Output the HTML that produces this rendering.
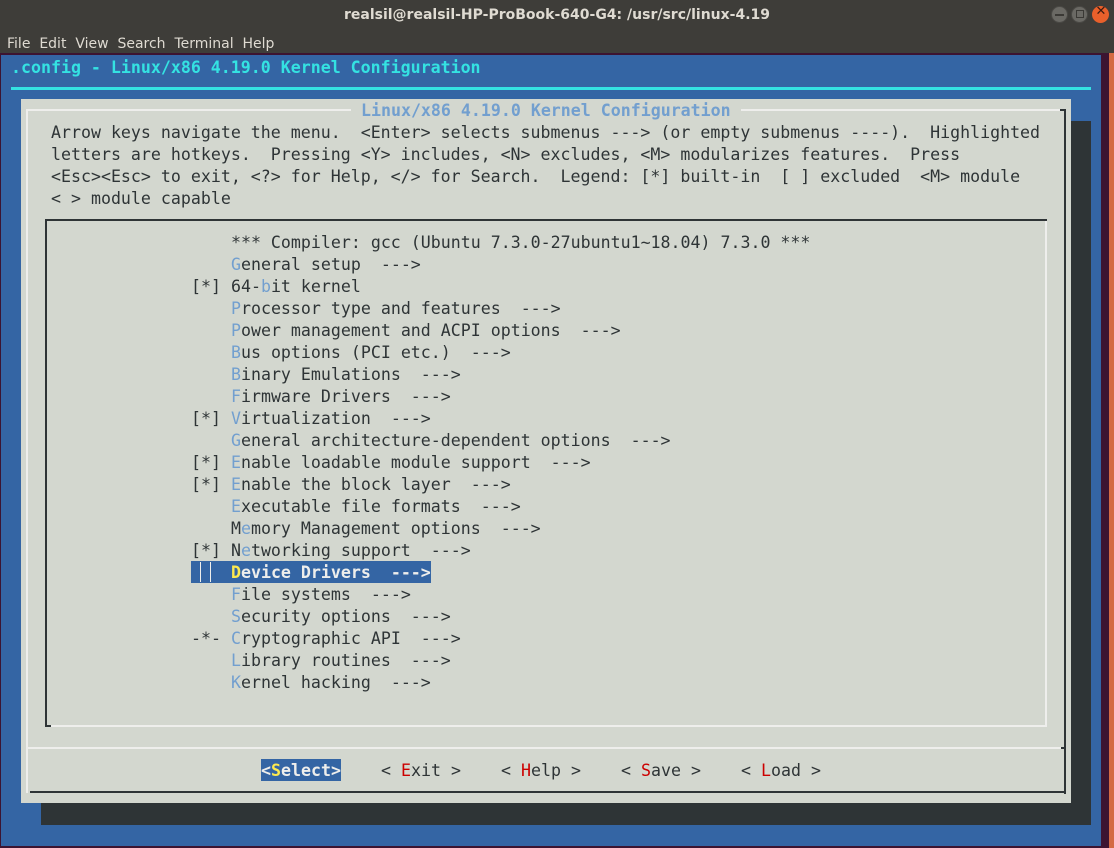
<!DOCTYPE html>
<html><head><meta charset="utf-8"><style>
*{margin:0;padding:0;box-sizing:border-box}
body{width:1114px;height:848px;overflow:hidden;background:#3465a4;position:relative;font-family:"DejaVu Sans Mono","Liberation Mono",monospace}
.abs{position:absolute}
.r{position:absolute;white-space:pre;font-size:16.6px;line-height:22px;height:22px;color:#2e3436;font-family:"DejaVu Sans Mono",monospace;padding-top:1px}
.h{color:#729fcf}
.ui{font-family:"DejaVu Sans","Liberation Sans",sans-serif;color:#dfdbd2;font-size:14px}
</style></head><body>
<div class="abs" style="left:0;top:0;width:1114px;height:28px;background:#3e3d39"></div>
<div class="abs ui" style="left:0;top:7px;width:1114px;text-align:center;font-weight:bold">realsil@realsil-HP-ProBook-640-G4: /usr/src/linux-4.19</div>
<div class="abs" style="left:1051px;top:6px;width:17px;height:17px;border-radius:50%;background:#6a6964;border:1px solid #4a4945"></div>
<div class="abs" style="left:1071px;top:6px;width:17px;height:17px;border-radius:50%;background:#6a6964;border:1px solid #4a4945"></div>
<div class="abs" style="left:1092px;top:6px;width:17px;height:17px;border-radius:50%;background:#e9602b"></div>
<div class="abs" style="left:1055px;top:14px;width:9px;height:2px;background:#3a3935"></div>
<div class="abs" style="left:1076px;top:10px;width:8px;height:8px;border:1.5px solid #3a3935"></div>
<div class="abs" style="left:1094px;top:4px;width:14px;color:#3a1a10;font-size:13px;text-align:center;font-family:'DejaVu Sans'">✕</div>
<div class="abs" style="left:0;top:28px;width:1114px;height:26px;background:#3e3d39"></div>
<div class="abs ui" style="left:7px;top:36px;word-spacing:0">File&nbsp; Edit&nbsp; View&nbsp; Search&nbsp; Terminal&nbsp; Help</div>
<div class="abs" style="left:0;top:53px;width:1114px;height:2px;background:#3c1431"></div>
<div class="abs" style="left:0;top:53px;width:1px;height:795px;background:#3c1431"></div>
<div class="abs" style="left:1101px;top:53px;width:8px;height:795px;background:#3c1431"></div>
<div class="abs" style="left:1109px;top:53px;width:5px;height:795px;background:#d46a43"></div>
<div class="abs" style="left:0;top:846px;width:1101px;height:2px;background:#3c1431"></div>
<div class="r" style="left:11px;top:56px;color:#34e2e2;font-weight:bold">.config - Linux/x86 4.19.0 Kernel Configuration</div>
<div class="abs" style="left:11px;top:87px;width:1080px;height:3px;background:#34e2e2"></div>
<div class="abs" style="left:41px;top:121px;width:1050px;height:704px;background:#2e3436"></div>
<div class="abs" style="left:21px;top:99px;width:1050px;height:704px;background:#d3d7cf"></div>
<div class="abs" style="left:26px;top:109px;width:2px;height:684px;background:#eeeeec"></div>
<div class="abs" style="left:26px;top:109px;width:1040px;height:2px;background:#eeeeec"></div>
<div class="abs" style="left:1064px;top:109px;width:2px;height:685px;background:#2e3436"></div>
<div class="abs" style="left:1060px;top:109px;width:6px;height:2px;background:#2e3436"></div>
<div class="abs" style="left:30px;top:791px;width:1036px;height:2px;background:#2e3436"></div>
<div class="r" style="left:351px;top:99px;background:#d3d7cf;color:#729fcf;font-weight:bold"> Linux/x86 4.19.0 Kernel Configuration </div>
<div class="r" style="left:51px;top:121px">Arrow keys navigate the menu.  &lt;Enter&gt; selects submenus ---&gt; (or empty submenus ----).  Highlighted</div>
<div class="r" style="left:51px;top:143px">letters are hotkeys.  Pressing &lt;Y&gt; includes, &lt;N&gt; excludes, &lt;M&gt; modularizes features.  Press</div>
<div class="r" style="left:51px;top:165px">&lt;Esc&gt;&lt;Esc&gt; to exit, &lt;?&gt; for Help, &lt;/&gt; for Search.  Legend: [*] built-in  [ ] excluded  &lt;M&gt; module</div>
<div class="r" style="left:51px;top:187px">&lt; &gt; module capable</div>
<div class="abs" style="left:45px;top:219px;width:1002px;height:2px;background:#2e3436"></div>
<div class="abs" style="left:45px;top:219px;width:2px;height:508px;background:#2e3436"></div>
<div class="abs" style="left:45px;top:725px;width:6px;height:2px;background:#2e3436"></div>
<div class="abs" style="left:1045px;top:221px;width:2px;height:506px;background:#eeeeec"></div>
<div class="abs" style="left:51px;top:725px;width:996px;height:2px;background:#eeeeec"></div>
<div class="abs" style="left:26px;top:747px;width:1035px;height:2px;background:#eeeeec"></div>
<div class="abs" style="left:1061px;top:747px;width:5px;height:2px;background:#2e3436"></div>
<div class="r" style="left:191px;top:231px">    *** Compiler: gcc (Ubuntu 7.3.0-27ubuntu1~18.04) 7.3.0 ***</div>
<div class="r" style="left:191px;top:253px">    <span class="h">G</span>eneral setup  ---&gt;</div>
<div class="r" style="left:191px;top:275px">[*] 64-<span class="h">b</span>it kernel</div>
<div class="r" style="left:191px;top:297px">    <span class="h">P</span>rocessor type and features  ---&gt;</div>
<div class="r" style="left:191px;top:319px">    <span class="h">P</span>ower management and ACPI options  ---&gt;</div>
<div class="r" style="left:191px;top:341px">    <span class="h">B</span>us options (PCI etc.)  ---&gt;</div>
<div class="r" style="left:191px;top:363px">    <span class="h">B</span>inary Emulations  ---&gt;</div>
<div class="r" style="left:191px;top:385px">    <span class="h">F</span>irmware Drivers  ---&gt;</div>
<div class="r" style="left:191px;top:407px">[*] <span class="h">V</span>irtualization  ---&gt;</div>
<div class="r" style="left:191px;top:429px">    <span class="h">G</span>eneral architecture-dependent options  ---&gt;</div>
<div class="r" style="left:191px;top:451px">[*] <span class="h">E</span>nable loadable module support  ---&gt;</div>
<div class="r" style="left:191px;top:473px">[*] <span class="h">E</span>nable the block layer  ---&gt;</div>
<div class="r" style="left:191px;top:495px">    <span class="h">E</span>xecutable file formats  ---&gt;</div>
<div class="r" style="left:191px;top:517px">    M<span class="h">e</span>mory Management options  ---&gt;</div>
<div class="r" style="left:191px;top:539px">[*] N<span class="h">e</span>tworking support  ---&gt;</div>
<div class="r" style="left:191px;top:561px;background:#3465a4;color:#eeeeec;font-weight:bold;width:240px">    <span style="color:#fce94f">D</span>evice Drivers  ---&gt;</div>
<div class="abs" style="left:200px;top:562px;width:11px;height:20px;border:1px solid #eeeeec;border-top:none;border-bottom:none"></div>
<div class="r" style="left:191px;top:583px">    <span class="h">F</span>ile systems  ---&gt;</div>
<div class="r" style="left:191px;top:605px">    <span class="h">S</span>ecurity options  ---&gt;</div>
<div class="r" style="left:191px;top:627px">-*- <span class="h">C</span>ryptographic API  ---&gt;</div>
<div class="r" style="left:191px;top:649px">    <span class="h">L</span>ibrary routines  ---&gt;</div>
<div class="r" style="left:191px;top:671px">    <span class="h">K</span>ernel hacking  ---&gt;</div>
<div class="r" style="left:261px;top:759px;background:#3465a4;color:#eeeeec;font-weight:bold;height:22px;width:80px">&lt;<span style="color:#fce94f">S</span>elect&gt;</div>
<div class="r" style="left:381px;top:759px">&lt; <span style="color:#cc0000">E</span>xit &gt;</div>
<div class="r" style="left:501px;top:759px">&lt; <span style="color:#cc0000">H</span>elp &gt;</div>
<div class="r" style="left:621px;top:759px">&lt; <span style="color:#cc0000">S</span>ave &gt;</div>
<div class="r" style="left:741px;top:759px">&lt; <span style="color:#cc0000">L</span>oad &gt;</div>
</body></html>
